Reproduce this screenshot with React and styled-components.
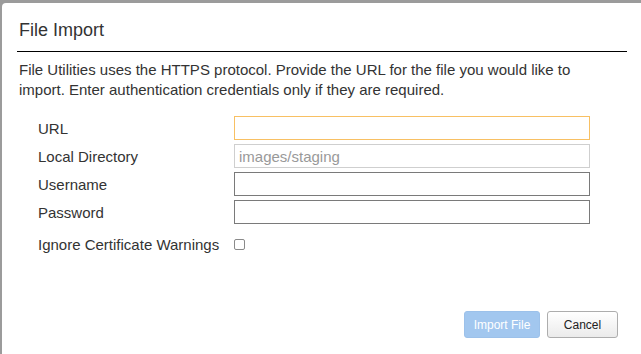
import React from "react";
import styled, { createGlobalStyle } from "styled-components";

const GlobalStyle = createGlobalStyle`
  html, body {
    margin: 0;
    padding: 0;
    background: #9b9b9b;
    overflow: hidden;
  }
  body {
    font-family: "Liberation Sans", Arial, sans-serif;
    color: #333;
  }
`;

const Dialog = styled.div`
  box-sizing: border-box;
  margin: 3px 0 0 2px;
  width: 639px;
  height: 351px;
  background: #fff;
  border-top-left-radius: 4px;
  display: flex;
  flex-direction: column;
  padding: 0 14px 16px 15px;
`;

const Header = styled.div`
  padding: 17px 0 10px 2px;
  border-bottom: 1px solid #000;
`;

const Title = styled.h2`
  margin: 0;
  font-size: 18px;
  font-weight: normal;
  line-height: 21px;
  color: #333;
`;

const Intro = styled.p`
  margin: 8px 0 0 2px;
  max-width: 575px;
  font-size: 15px;
  line-height: 20px;
  color: #333;
`;

const Form = styled.div`
  margin: 16px 0 0 21px;
  display: grid;
  grid-template-columns: 196px 356px;
  row-gap: 4px;
  align-items: center;
`;

const Label = styled.label`
  font-size: 15px;
  color: #333;
  margin-top: ${(p) => (p.$check ? "8px" : "0")};
`;

const borders = {
  focus: "#f8c063",
  readonly: "#cfcfcf",
  normal: "#7a7a7a",
};

const TextInput = styled.input`
  box-sizing: border-box;
  width: 356px;
  height: 24px;
  margin: 0;
  padding: 0 4px;
  border: 1px solid ${(p) => borders[p.$tone || "normal"]};
  border-radius: 0;
  font-family: "Liberation Sans", Arial, sans-serif;
  font-size: 15px;
  color: #999;
  background: #fff;
  outline: none;
`;

const CheckBox = styled.span`
  display: block;
  box-sizing: border-box;
  width: 11px;
  height: 11px;
  margin-top: 8px;
  border: 1px solid #8a8a8a;
  border-radius: 2px;
  background: #fff;
`;

const Footer = styled.div`
  margin-top: auto;
  display: flex;
  justify-content: flex-end;
  gap: 7px;
  padding-right: 9px;
`;

const Button = styled.button`
  box-sizing: border-box;
  height: 27px;
  width: ${(p) => p.$w}px;
  padding: 0;
  border-radius: 3px;
  font-family: "Liberation Sans", Arial, sans-serif;
  font-size: 12px;
  cursor: pointer;
  ${(p) =>
    p.$primary
      ? `
    background: #a2c7ef;
    border: 1px solid #9cc1ea;
    color: #fff;
  `
      : `
    background: linear-gradient(#ffffff, #ebebeb);
    border: 1px solid #adadad;
    color: #222;
  `}
`;

export default function App() {
  return (
    <>
      <GlobalStyle />
      <Dialog>
        <Header>
          <Title>File Import</Title>
        </Header>
        <Intro>
          File Utilities uses the HTTPS protocol. Provide the URL for the file
          you would like to import. Enter authentication credentials only if
          they are required.
        </Intro>
        <Form>
          <Label>URL</Label>
          <TextInput $tone="focus" />
          <Label>Local Directory</Label>
          <TextInput $tone="readonly" defaultValue="images/staging" readOnly />
          <Label>Username</Label>
          <TextInput />
          <Label>Password</Label>
          <TextInput type="password" />
          <Label $check>Ignore Certificate Warnings</Label>
          <CheckBox />
        </Form>
        <Footer>
          <Button $primary $w={76}>Import File</Button>
          <Button $w={71}>Cancel</Button>
        </Footer>
      </Dialog>
    </>
  );
}
